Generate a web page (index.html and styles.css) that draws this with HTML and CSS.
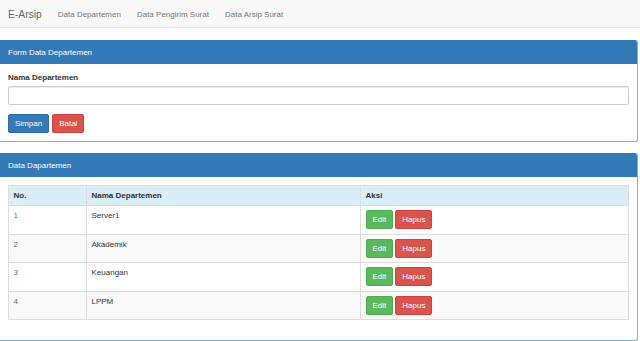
FILE: index.html
```html
<!DOCTYPE html>
<html lang="id">
<head>
  <meta charset="UTF-8">
  <meta name="viewport" content="width=device-width, initial-scale=1.0">
  <title>E-Arsip</title>
  <link rel="stylesheet" href="styles.css">
</head>
<body>

  <nav class="navbar">
    <a class="brand" href="#">E-Arsip</a>
    <ul class="nav">
      <li><a href="#">Data Departemen</a></li>
      <li><a href="#">Data Pengirim Surat</a></li>
      <li><a href="#">Data Arsip Surat</a></li>
    </ul>
  </nav>

  <div class="panel">
    <div class="panel-heading">Form Data Departemen</div>
    <div class="panel-body">
      <label for="nama">Nama Departemen</label>
      <input type="text" id="nama" class="form-control">
      <div class="btn-group">
        <button class="btn btn-primary">Simpan</button>
        <button class="btn btn-danger">Batal</button>
      </div>
    </div>
  </div>

  <div class="panel">
    <div class="panel-heading">Data Dapartemen</div>
    <div class="panel-body">
      <table class="table">
        <colgroup>
          <col class="col-no">
          <col class="col-nama">
          <col>
        </colgroup>
        <tbody>
          <tr class="info">
            <th>No.</th>
            <th>Nama Departemen</th>
            <th>Aksi</th>
          </tr>
          <tr>
            <td class="num">1</td>
            <td>Server1</td>
            <td><div class="btn-group"><button class="btn btn-success">Edit</button><button class="btn btn-danger">Hapus</button></div></td>
          </tr>
          <tr>
            <td class="num">2</td>
            <td>Akademik</td>
            <td><div class="btn-group"><button class="btn btn-success">Edit</button><button class="btn btn-danger">Hapus</button></div></td>
          </tr>
          <tr>
            <td class="num">3</td>
            <td>Keuangan</td>
            <td><div class="btn-group"><button class="btn btn-success">Edit</button><button class="btn btn-danger">Hapus</button></div></td>
          </tr>
          <tr>
            <td class="num">4</td>
            <td>LPPM</td>
            <td><div class="btn-group"><button class="btn btn-success">Edit</button><button class="btn btn-danger">Hapus</button></div></td>
          </tr>
        </tbody>
      </table>
    </div>
  </div>

</body>
</html>
```

FILE: styles.css
```css
/* General Styles */
* {
  margin: 0;
  padding: 0;
  box-sizing: border-box;
}

body {
  font-family: 'Liberation Sans', Arial, sans-serif;
  font-size: 8px;
  line-height: 11px;
  color: #333;
  background-color: #fff;
}

/* Navbar */
.navbar {
  display: flex;
  align-items: center;
  height: 28px;
  padding-top: 2px;
  background-color: #f8f8f8;
  border-bottom: 1px solid #e7e7e7;
  margin-bottom: 12px;
}

.brand {
  padding: 0 8px;
  font-size: 10.3px;
  color: #666;
  text-decoration: none;
}

.nav {
  display: flex;
  list-style: none;
}

.nav a {
  display: block;
  padding: 0 8px;
  color: #777;
  text-decoration: none;
}

/* Panels */
.panel {
  margin: 0 2px 11px 0;
  border: 1px solid #84acd5;
  border-left: none;
  border-top-color: #337ab7;
  border-radius: 0 3px 3px 0;
  background-color: #fff;
}

.panel-heading {
  background-color: #337ab7;
  color: #fff;
  padding: 6px 8px;
  border-top-right-radius: 2px;
}

.panel-body {
  padding: 8px;
}

label {
  display: block;
  font-weight: bold;
  margin-bottom: 3px;
}

.form-control {
  display: block;
  width: 100%;
  height: 19px;
  margin-bottom: 9px;
  padding: 0 7px;
  border: 1px solid #ccc;
  border-radius: 2px;
  box-shadow: inset 0 1px 1px rgba(0, 0, 0, 0.075);
  font: inherit;
}

/* Buttons */
.btn-group {
  display: flex;
  gap: 3px;
}

td .btn-group {
  gap: 2px;
}

.btn {
  height: 19px;
  padding: 0 6px;
  font-family: inherit;
  font-size: 8px;
  color: #fff;
  border: 1px solid transparent;
  border-radius: 2px;
  cursor: pointer;
}

.btn-primary {
  background-color: #337ab7;
  border-color: #2e6da4;
}

.btn-danger {
  background-color: #d9534f;
  border-color: #d43f3a;
}

.btn-success {
  background-color: #5cb85c;
  border-color: #4cae4c;
}

/* Table */
.table {
  width: 100%;
  border-collapse: collapse;
  border: 1px solid #ddd;
  margin-bottom: 11.5px;
}

.col-no {
  width: 78px;
}

.col-nama {
  width: 274px;
}

.table th,
.table td {
  border: 1px solid #ddd;
  text-align: left;
  vertical-align: top;
}

.table th {
  padding: 4px 4.5px;
  font-weight: bold;
}

.table td {
  padding: 4.25px 4.5px;
}

.table tr:nth-child(odd) {
  background-color: #f9f9f9;
}

.table tr.info {
  background-color: #d9edf7;
}

.num {
  color: #4d6f92;
}
```
